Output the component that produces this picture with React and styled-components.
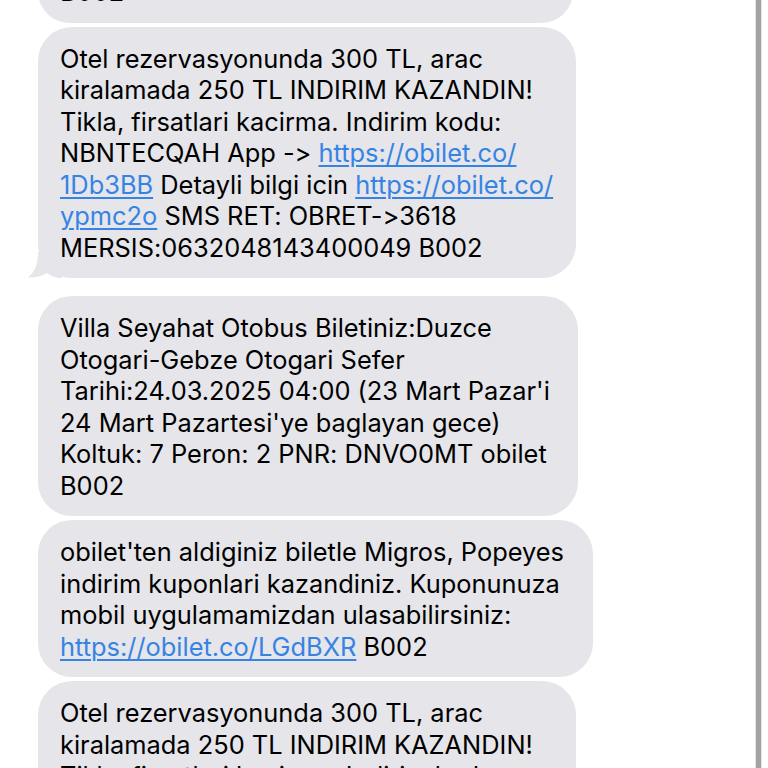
import React from 'react';
import styled, { createGlobalStyle } from 'styled-components';

const GlobalStyle = createGlobalStyle`
  html, body {
    margin: 0;
    padding: 0;
    background: #fff;
    overflow: hidden;
  }
  body {
    font-family: Inter, "Noto Sans", "Liberation Sans", sans-serif;
  }
`;

const Screen = styled.div`
  width: 768px;
  height: 768px;
  overflow: hidden;
  display: flex;
  background: #fff;
`;

const Thread = styled.div`
  flex: 1;
  display: flex;
  flex-direction: column;
  align-items: flex-start;
  padding-left: 38px;
  margin-top: -40px;
`;

const Scrollbar = styled.div`
  width: 5px;
  margin-right: 6px;
  background: #a3a3a3;
  border-left: 1px solid #e4e4e4;
  border-right: 1px solid #e4e4e4;
`;

const Bubble = styled.div`
  position: relative;
  box-sizing: border-box;
  width: ${(p) => p.$width}px;
  margin-bottom: ${(p) => (p.$tail ? 18 : 4)}px;
  padding: 16px 0 15px 22px;
  border-radius: 34px;
  background: #e5e5ea;
  color: #000;
  font-size: 25.4px;
  line-height: 31.5px;
  letter-spacing: 0;
  font-variant-ligatures: none;
  font-feature-settings: "calt" 0, "liga" 0;
  flex-shrink: 0;
`;

const Line = styled.div`
  white-space: nowrap;
`;

const Link = styled.a`
  color: #3584e4;
  text-decoration: underline;
  text-decoration-thickness: 1.5px;
  text-underline-offset: 3px;
`;

const Tail = styled.svg`
  position: absolute;
  left: -10px;
  bottom: 0;
  width: 34px;
  height: 26px;
`;

const BubbleTail = () => (
  <Tail viewBox="0 0 34 26">
    <path
      d="M10 0 C10 14 6 21 0 25.5 C8 25.5 14 24 19 21 C23 24 28 26 34 26 L34 0 Z"
      fill="#e5e5ea"
    />
  </Tail>
);

const messages = [
  { width: 535, lines: [['B002']] },
  {
    width: 538,
    tail: true,
    lines: [
      ['Otel rezervasyonunda 300 TL, arac'],
      ['kiralamada 250 TL INDIRIM KAZANDIN!'],
      ['Tikla, firsatlari kacirma. Indirim kodu:'],
      ['NBNTECQAH App -> ', { link: 'https://obilet.co/' }],
      [{ link: '1Db3BB' }, ' Detayli bilgi icin ', { link: 'https://obilet.co/' }],
      [{ link: 'ypmc2o' }, ' SMS RET: OBRET->3618'],
      ['MERSIS:0632048143400049 B002'],
    ],
  },
  {
    width: 540,
    lines: [
      ['Villa Seyahat Otobus Biletiniz:Duzce'],
      ['Otogari-Gebze Otogari Sefer'],
      ["Tarihi:24.03.2025 04:00 (23 Mart Pazar'i"],
      ["24 Mart Pazartesi'ye baglayan gece)"],
      ['Koltuk: 7 Peron: 2 PNR: DNVO0MT obilet'],
      ['B002'],
    ],
  },
  {
    width: 555,
    lines: [
      ["obilet'ten aldiginiz biletle Migros, Popeyes"],
      ['indirim kuponlari kazandiniz. Kuponunuza'],
      ['mobil uygulamamizdan ulasabilirsiniz:'],
      [{ link: 'https://obilet.co/LGdBXR' }, ' B002'],
    ],
  },
  {
    width: 538,
    lines: [
      ['Otel rezervasyonunda 300 TL, arac'],
      ['kiralamada 250 TL INDIRIM KAZANDIN!'],
      ['Tikla, firsatlari kacirma. Indirim kodu:'],
      ['NBNTECQAH App -> ', { link: 'https://obilet.co/' }],
    ],
  },
];

export default function App() {
  return (
    <Screen>
      <GlobalStyle />
      <Thread>
        {messages.map((m, i) => (
          <Bubble key={i} $width={m.width} $tail={m.tail}>
            {m.tail && <BubbleTail />}
            {m.lines.map((parts, j) => (
              <Line key={j}>
                {parts.map((p, k) =>
                  typeof p === 'string' ? (
                    <React.Fragment key={k}>{p}</React.Fragment>
                  ) : (
                    <Link key={k} href="#">
                      {p.link}
                    </Link>
                  )
                )}
              </Line>
            ))}
          </Bubble>
        ))}
      </Thread>
      <Scrollbar />
    </Screen>
  );
}
